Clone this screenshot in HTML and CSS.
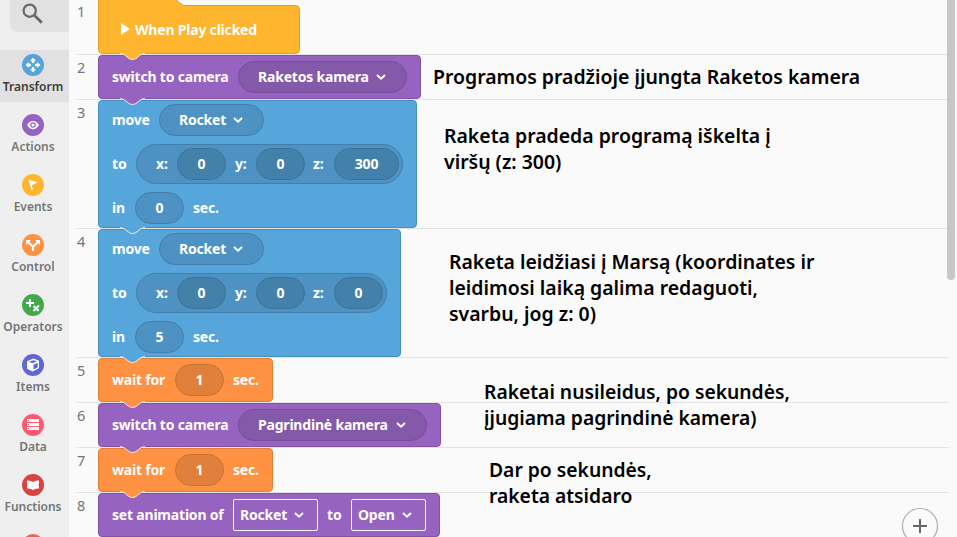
FILE: index.html
```html
<!DOCTYPE html>
<html lang="lt">
<head>
<meta charset="utf-8">
<title>Code</title>
<link rel="stylesheet" href="styles.css">
</head>
<body>
<svg class="defs" aria-hidden="true">
  <symbol id="tab" viewBox="0 0 28 8"><path class="tab-fill" d="M1 0H24.500C22 .8 20.500 1.700 18.500 3.500C16.500 5.300 14.500 6.500 12.500 6.500C10.500 6.500 8.500 5.300 6.500 3.500C4.500 1.700 3 .8 .5 .2Z"/><path class="tab-line" d="M0 .7C3 .9 4.500 1.800 6.500 3.500C8.500 5.300 10.500 6.500 12.500 6.500C14.500 6.500 16.500 5.300 18.500 3.500C20.500 1.800 22 .9 25 .7"/></symbol>
  <symbol id="chev" viewBox="0 0 10 8"><path d="M1 2L5 5.800L9 2" fill="none" stroke="#fff" stroke-width="1.900"/></symbol>
</svg>
<div class="app">
  <nav class="sidebar">
    <div class="search"><svg width="22" height="22" viewBox="0 0 22 22"><g fill="none" stroke="#686868" stroke-width="2.200"><circle cx="7.700" cy="7.700" r="6.100"/><path d="M12.300 12.300L19.800 19.800" stroke-width="2.800"/></g></svg></div>
    <div class="item active"><svg class="icon" viewBox="0 0 22 22"><circle cx="11" cy="11" r="11" fill="#56a5da"/><path fill="#fff" d="M11 3.700L14 6.700H12.200V9H9.800V6.700H8ZM11 18.300L8 15.300H9.800V13H12.200V15.300H14ZM3.700 11L6.700 8V9.800H9V12.200H6.700V14ZM18.300 11L15.300 14V12.200H13V9.800H15.300V8Z"/></svg><span>Transform</span></div>
    <div class="item"><svg class="icon" viewBox="0 0 22 22"><circle cx="11" cy="11" r="11" fill="#9763c1"/><path fill="#fff" d="M5 11Q7.500 6.900 11 6.900T17 11Q14.500 15.200 11 15.200T5 11"/><circle cx="11" cy="11" r="2.200" fill="#fff" stroke="#9561bf" stroke-width="1.200"/></svg><span>Actions</span></div>
    <div class="item"><svg class="icon" viewBox="0 0 22 22"><circle cx="11" cy="11" r="11" fill="#ffb52e"/><path fill="#fff" d="M6.700 6L8 5.500L8.400 6.300L15.800 8.200L9.800 11.200L11 15.600L9.300 16Z"/></svg><span>Events</span></div>
    <div class="item"><svg class="icon" viewBox="0 0 22 22"><circle cx="11" cy="11" r="11" fill="#ff9142"/><path fill="#fff" d="M4 6H9L7.300 7.700L11 11.300L14.700 7.700L13 6H18V11L16.300 9.300L12.100 13.300V17H9.900V13.300L5.700 9.300L4 11Z"/></svg><span>Control</span></div>
    <div class="item"><svg class="icon" viewBox="0 0 22 22"><circle cx="11" cy="11" r="11" fill="#45a84d"/><path d="M8 5V13M4 9H12M11.500 17L17 11.500" stroke="#fff" stroke-width="1.900"/><circle cx="12.500" cy="12.800" r="1.200" fill="#fff"/><circle cx="15.800" cy="16" r="1.200" fill="#fff"/></svg><span>Operators</span></div>
    <div class="item"><svg class="icon" viewBox="0 0 22 22"><circle cx="11" cy="11" r="11" fill="#6066d4"/><path fill="#fff" stroke="#fff" stroke-linejoin="round" d="M5.500 7.500L11.500 5L16.500 7V14L10.500 17L5.500 14.500Z"/><path fill="#6066d4" d="M6.800 7.700L11.500 6.200L15 7.300L10.500 9.200ZM11.500 10.700L15.700 8.700V13.500L11.500 15.500Z"/></svg><span>Items</span></div>
    <div class="item"><svg class="icon" viewBox="0 0 22 22"><circle cx="11" cy="11" r="11" fill="#ff5b70"/><path fill="#fff" d="M5 5H17V8H5ZM5 9H17V12H5ZM5 13H17V16H5Z"/><path fill="#ff5b70" d="M6 6H7V7H6ZM6 10H7V11H6ZM6 14H7V15H6Z"/></svg><span>Data</span></div>
    <div class="item"><svg class="icon" viewBox="0 0 22 22"><circle cx="11" cy="11" r="11" fill="#d94343"/><path fill="#fff" d="M5 6.500Q8.500 6 11 8Q13.500 6 17 6.500V9.500Q15.800 10.500 17 12V14.500Q13.500 14 11 16Q8.500 14 5 14.500V12Q6.300 10.500 5 9.500Z"/></svg><span>Functions</span></div>
    <div class="item"><svg class="icon" viewBox="0 0 22 22"><circle cx="11" cy="11" r="11" fill="#e8655a"/></svg></div>
  </nav>

  <main class="editor">
    <div class="row first"><span class="num">1</span>
      <div class="block hat"><svg class="shape" width="202" height="55" viewBox="0 0 202 55"><path d="M.5 -5V49.500Q.5 53.500 4.500 53.500H197.500Q201.500 53.500 201.500 49.500V9.500Q201.500 5.500 197.500 5.500H88C84 5.500 82 3 78 0L72 -5Z" fill="#ffb52e" stroke="#dda02f"/></svg>
        <div class="line"><svg class="play" width="9" height="12" viewBox="0 0 9 12"><path d="M0 0L9 6L0 12Z" fill="#fff"/></svg><span class="label">When Play clicked</span></div>
        <svg class="tab"><use href="#tab"/></svg></div></div>
    <div class="row"><span class="num">2</span>
      <div class="block action w323"><div class="line"><span class="label w-switch">switch to camera</span><span class="pill select w169"><b>Raketos kamera</b><svg class="chev"><use href="#chev"/></svg></span></div><svg class="tab"><use href="#tab"/></svg></div></div>
    <div class="row tall"><span class="num">3</span>
      <div class="block move w319">
        <div class="line"><span class="label w-move">move</span><span class="pill select w105"><b>Rocket</b><svg class="chev"><use href="#chev"/></svg></span></div>
        <div class="line"><span class="label w-to">to</span><span class="vector w267"><i>x:</i><span class="pill deep">0</span><i>y:</i><span class="pill deep">0</span><i>z:</i><span class="pill deep wide">300</span></span></div>
        <div class="line"><span class="label w-in">in</span><span class="pill">0</span><span class="label sec">sec.</span></div>
        <svg class="tab"><use href="#tab"/></svg></div></div>
    <div class="row tall"><span class="num">4</span>
      <div class="block move w303">
        <div class="line"><span class="label w-move">move</span><span class="pill select w105"><b>Rocket</b><svg class="chev"><use href="#chev"/></svg></span></div>
        <div class="line"><span class="label w-to">to</span><span class="vector w251"><i>x:</i><span class="pill deep">0</span><i>y:</i><span class="pill deep">0</span><i>z:</i><span class="pill deep">0</span></span></div>
        <div class="line"><span class="label w-in">in</span><span class="pill">5</span><span class="label sec">sec.</span></div>
        <svg class="tab"><use href="#tab"/></svg></div></div>
    <div class="row"><span class="num">5</span>
      <div class="block control w175"><div class="line"><span class="label w-wait">wait for</span><span class="pill">1</span><span class="label sec">sec.</span></div><svg class="tab"><use href="#tab"/></svg></div></div>
    <div class="row"><span class="num">6</span>
      <div class="block action w343"><div class="line"><span class="label w-switch">switch to camera</span><span class="pill select w189"><b>Pagrindinė kamera</b><svg class="chev"><use href="#chev"/></svg></span></div><svg class="tab"><use href="#tab"/></svg></div></div>
    <div class="row"><span class="num">7</span>
      <div class="block control w175"><div class="line"><span class="label w-wait">wait for</span><span class="pill">1</span><span class="label sec">sec.</span></div><svg class="tab"><use href="#tab"/></svg></div></div>
    <div class="row"><span class="num">8</span>
      <div class="block action w342"><div class="line"><span class="label w-anim">set animation of</span><span class="box w85"><b>Rocket</b><svg class="chev"><use href="#chev"/></svg></span><span class="label mid">to</span><span class="box w75"><b>Open</b><svg class="chev"><use href="#chev"/></svg></span></div></div></div>
  </main>

  <p class="note n1">Programos pradžioje įjungta Raketos kamera</p>
  <p class="note n2">Raketa pradeda programą iškelta į<br>viršų (z: 300)</p>
  <p class="note n3">Raketa leidžiasi į Marsą (koordinates ir<br>leidimosi laiką galima redaguoti,<br>svarbu, jog z: 0)</p>
  <p class="note n4">Raketai nusileidus, po sekundės,<br>įjugiama pagrindinė kamera)</p>
  <p class="note n5">Dar po sekundės,<br>raketa atsidaro</p>
  <div class="scrollbar"></div>
  <svg class="zoom-in" width="38" height="38" viewBox="0 0 38 38"><circle cx="19" cy="19" r="17.500" fill="#fafafa" stroke="#b0b0b0" stroke-width="1.200"/><path d="M19 12V26M12 19H26" stroke="#686868" stroke-width="2"/></svg>
</div>
</body>
</html>
```
FILE: styles.css
```css
* { box-sizing: border-box; }
body { margin: 0; font-family: "Noto Sans", sans-serif; overflow: hidden; }
.defs { position: absolute; width: 0; height: 0; }
.app { position: relative; display: flex; width: 957px; height: 537px; overflow: hidden; background: #fafafa; }

.sidebar { width: 69px; flex: none; background: #efefef; display: flex; flex-direction: column; }
.search { flex: none; height: 32px; margin: 0 0 18px 10px; padding: 3px 0 0 12px; background: #e1e1e1; border-bottom-left-radius: 8px; }
.search svg { display: block; }
.item { flex: none; height: 52px; margin-bottom: 8px; padding: 4px 3px 0 0; display: flex; flex-direction: column; align-items: center; color: #757575; font-size: 12px; font-weight: 600; line-height: 22px; }
.item.active { background: #e1e1e1; color: #3c3c3c; }
.icon { width: 22px; height: 22px; flex: none; display: block; }

.editor { flex: 1; padding: 0 8px; }
.row { display: flex; height: 45px; border-bottom: 1px solid #e3e3e3; }
.row.first { height: 55px; }
.row.tall { height: 129px; }
.num { width: 21px; flex: none; padding-top: 2px; font-size: 14.5px; line-height: 20px; color: #757575; }
.row.first .num { padding-top: 1px; }

.block { position: relative; border: 1px solid; border-radius: 4px; color: #fff; font-size: 14px; letter-spacing: -.2px; font-weight: 700; height: 100%; }
.block b { font-weight: inherit; padding-bottom: 2px; white-space: nowrap; }
.hat { width: 202px; border: 0; padding: 9px 0 0 23px; --c: #ffb52e; }
.shape { position: absolute; left: 0; top: 0; }
.action { --c: #9763c1; background: var(--c); border-color: #8252a9; --pill: #8559aa; --edge: #774e9b; }
.move { --c: #57a6db; background: var(--c); border-color: #4590c2; --pill: #4d92c2; --edge: #4280ab; }
.control { --c: #ff9142; background: var(--c); border-color: #df7f3a; --pill: #e0803b; --edge: #c97235; }
.tab { position: absolute; z-index: 2; left: 21px; bottom: -8px; width: 28px; height: 8px; }
.hat .tab { left: 22px; bottom: -7px; }
.tab-fill { fill: var(--c); }
.tab-line { fill: none; stroke: #f5efea; stroke-width: 1; }
.block > .line { position: relative; display: flex; align-items: center; height: 44px; padding-left: 13px; margin-top: -1px; }
.hat > .line { padding-left: 0; }
.move > .line { margin-top: 0; }
.move > .line:first-child { margin-top: -3px; }
.label { flex: none; white-space: nowrap; padding-bottom: 2px; }
.play { margin-right: 5px; margin-bottom: 2px; }
.w-switch { width: 126px; }
.w-move { width: 47px; }
.w-to { width: 24px; }
.w-in { width: 23px; }
.w-wait { width: 63px; }
.w-anim { width: 121px; }
.sec { margin-left: 9px; }
.mid { width: 33px; padding-left: 9px; }
.pill { flex: none; width: 49px; height: 32px; border-radius: 16px; border: 1px solid var(--edge); background: var(--pill); display: flex; align-items: center; justify-content: center; padding-bottom: 2px; }
.select { justify-content: space-between; padding: 0 20px 0 19px; }
.deep { background: #4381aa; border-color: #3b7399; }
.wide { width: 65px; }
.chev { width: 10px; height: 8px; flex: none; }
.vector { display: flex; align-items: center; height: 40px; border-radius: 20px; border: 1px solid var(--edge); background: var(--pill); padding-left: 19px; }
.vector i { font-style: normal; width: 21px; padding-bottom: 2px; }
.vector .pill + i { width: 30px; padding-left: 9px; }
.vector .pill + i + .pill + i { width: 29px; padding-left: 8px; }
.box { display: flex; align-items: center; justify-content: space-between; height: 32px; border: 1px solid #fff; border-radius: 2px; padding: 0 13px 0 6px; }
.w323 { width: 323px; } .w319 { width: 319px; } .w303 { width: 303px; } .w175 { width: 175px; }
.w343 { width: 343px; } .w342 { width: 342px; } .w169 { width: 169px; } .w105 { width: 105px; }
.w267 { width: 267px; } .w251 { width: 251px; } .w189 { width: 189px; } .w85 { width: 85px; } .w75 { width: 75px; }

.note { position: absolute; z-index: 3; margin: 0; color: #000; font-size: 19.45px; font-weight: 600; line-height: 26px; white-space: nowrap; }
.n1 { left: 433px; top: 64px; }
.n2 { left: 444px; top: 123px; }
.n3 { left: 449px; top: 249px; }
.n4 { left: 484px; top: 379px; font-size: 19.3px; }
.n5 { left: 489px; top: 457px; font-size: 19.3px; }
.scrollbar { position: absolute; right: 2px; top: -8px; width: 8px; height: 288px; border-radius: 4px; background: rgba(0, 0, 0, .2); }
.zoom-in { position: absolute; left: 901px; top: 507px; }
```
